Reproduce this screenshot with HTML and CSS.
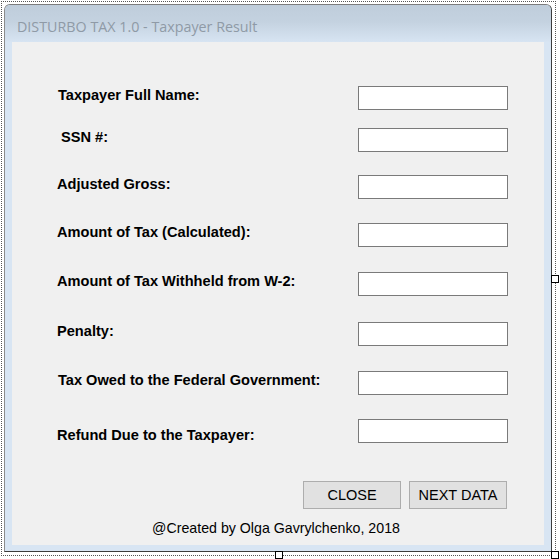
FILE: index.html
```html
<!DOCTYPE html>
<html>
<head>
<meta charset="utf-8">
<title>DISTURBO TAX 1.0 - Taxpayer Result</title>
<link rel="stylesheet" href="styles.css">
</head>
<body>
<div class="selection">
  <div class="window">
    <div class="titlebar">DISTURBO TAX 1.0 - Taxpayer Result</div>
    <div class="client">
      <div class="form">
        <div class="row"><label class="label label-nudge">Taxpayer Full Name:</label><div class="textbox"></div></div>
        <div class="row"><label class="label">&nbsp;SSN #:</label><div class="textbox"></div></div>
        <div class="row"><label class="label">Adjusted Gross:</label><div class="textbox"></div></div>
        <div class="row"><label class="label">Amount of Tax (Calculated):</label><div class="textbox"></div></div>
        <div class="row"><label class="label">Amount of Tax Withheld from W-2:</label><div class="textbox"></div></div>
        <div class="row"><label class="label">Penalty:</label><div class="textbox"></div></div>
        <div class="row"><label class="label label-nudge">Tax Owed to the Federal Government:</label><div class="textbox"></div></div>
        <div class="row"><label class="label label-low">Refund Due to the Taxpayer:</label><div class="textbox"></div></div>
      </div>
      <div class="buttons">
        <button class="btn">CLOSE</button>
        <button class="btn">NEXT DATA</button>
      </div>
      <div class="footer">@Created by Olga Gavrylchenko, 2018</div>
    </div>
  </div>
</div>
<div class="handle handle-right"></div>
<div class="handle handle-bottom"></div>
<div class="handle handle-corner"></div>
</body>
</html>
```

FILE: styles.css
```css
html, body {
  margin: 0;
  padding: 0;
  background: #ffffff;
  overflow: hidden;
}

body {
  width: 560px;
  height: 559px;
  position: relative;
  font-family: "Liberation Sans", Arial, sans-serif;
}

.selection {
  margin: 1px 0 0 1px;
  border: 1px dotted #555555;
  padding: 2px 3px 3px 2px;
  box-sizing: border-box;
  width: 555px;
  height: 555px;
}

.window {
  width: 548px;
  height: 548px;
  box-sizing: border-box;
  border-top: 1px solid #7d7d7d;
  border-left: 1px solid #8c8c8c;
  border-right: 1px solid #3c3c3c;
  border-bottom: 1px solid #3c3c3c;
  border-radius: 6px 6px 0 0;
  background: #d8e5f3;
  display: flex;
  flex-direction: column;
  padding: 0 7px 6px 7px;
  position: relative;
}

.window::before {
  content: "";
  position: absolute;
  left: 0;
  right: 0;
  top: 0;
  height: 37px;
  border-radius: 5px 5px 0 0;
  background: linear-gradient(to bottom, #bfcddb 0%, #c4d2e0 45%, #d7e4f2 100%);
}

.titlebar {
  position: relative;
  height: 37px;
  box-sizing: border-box;
  padding: 12px 0 0 5px;
  font-family: "Open Sans", "Noto Sans", sans-serif;
  font-size: 14.3px;
  line-height: 20px;
  color: #8f9aa6;
  white-space: nowrap;
}

.client {
  position: relative;
  flex: 1;
  background: #f0f0f0;
  padding-top: 44px;
  box-sizing: border-box;
  display: flex;
  flex-direction: column;
}

.form {
  display: grid;
  grid-template-rows: 42px 47px 48px 49px 50px 49px 48px 24px;
  align-items: start;
  padding: 0 36px 0 45px;
}

.row {
  display: flex;
  align-items: center;
  justify-content: space-between;
  height: 24px;
}

.label {
  font-weight: bold;
  font-size: 14.6px;
  line-height: 17px;
  color: #000000;
  padding-bottom: 6px;
  white-space: nowrap;
}

.label-nudge {
  padding-left: 1px;
}

.label-low {
  padding-bottom: 0;
  padding-top: 8px;
}

.textbox {
  width: 150px;
  height: 24px;
  box-sizing: border-box;
  background: #ffffff;
  border: 1px solid #7a7a7a;
  flex: none;
}

.buttons {
  display: flex;
  justify-content: flex-end;
  gap: 8px;
  margin-top: 38px;
  padding-right: 37px;
}

.btn {
  width: 98px;
  height: 28px;
  box-sizing: border-box;
  background: #e1e1e1;
  border: 1px solid #adadad;
  font-family: "Liberation Sans", Arial, sans-serif;
  font-size: 14.5px;
  color: #000000;
  padding: 0;
  margin: 0;
}

.footer {
  margin-top: 11px;
  text-align: center;
  font-size: 14.2px;
  line-height: 16px;
  color: #000000;
  padding-right: 4px;
}

.handle {
  position: absolute;
  width: 8px;
  height: 8px;
  box-sizing: border-box;
  background: #ffffff;
  border: 1px solid #000000;
}

.handle-right { left: 551px; top: 275px; }
.handle-bottom { left: 275px; top: 551px; }
.handle-corner { left: 551px; top: 551px; }
```
